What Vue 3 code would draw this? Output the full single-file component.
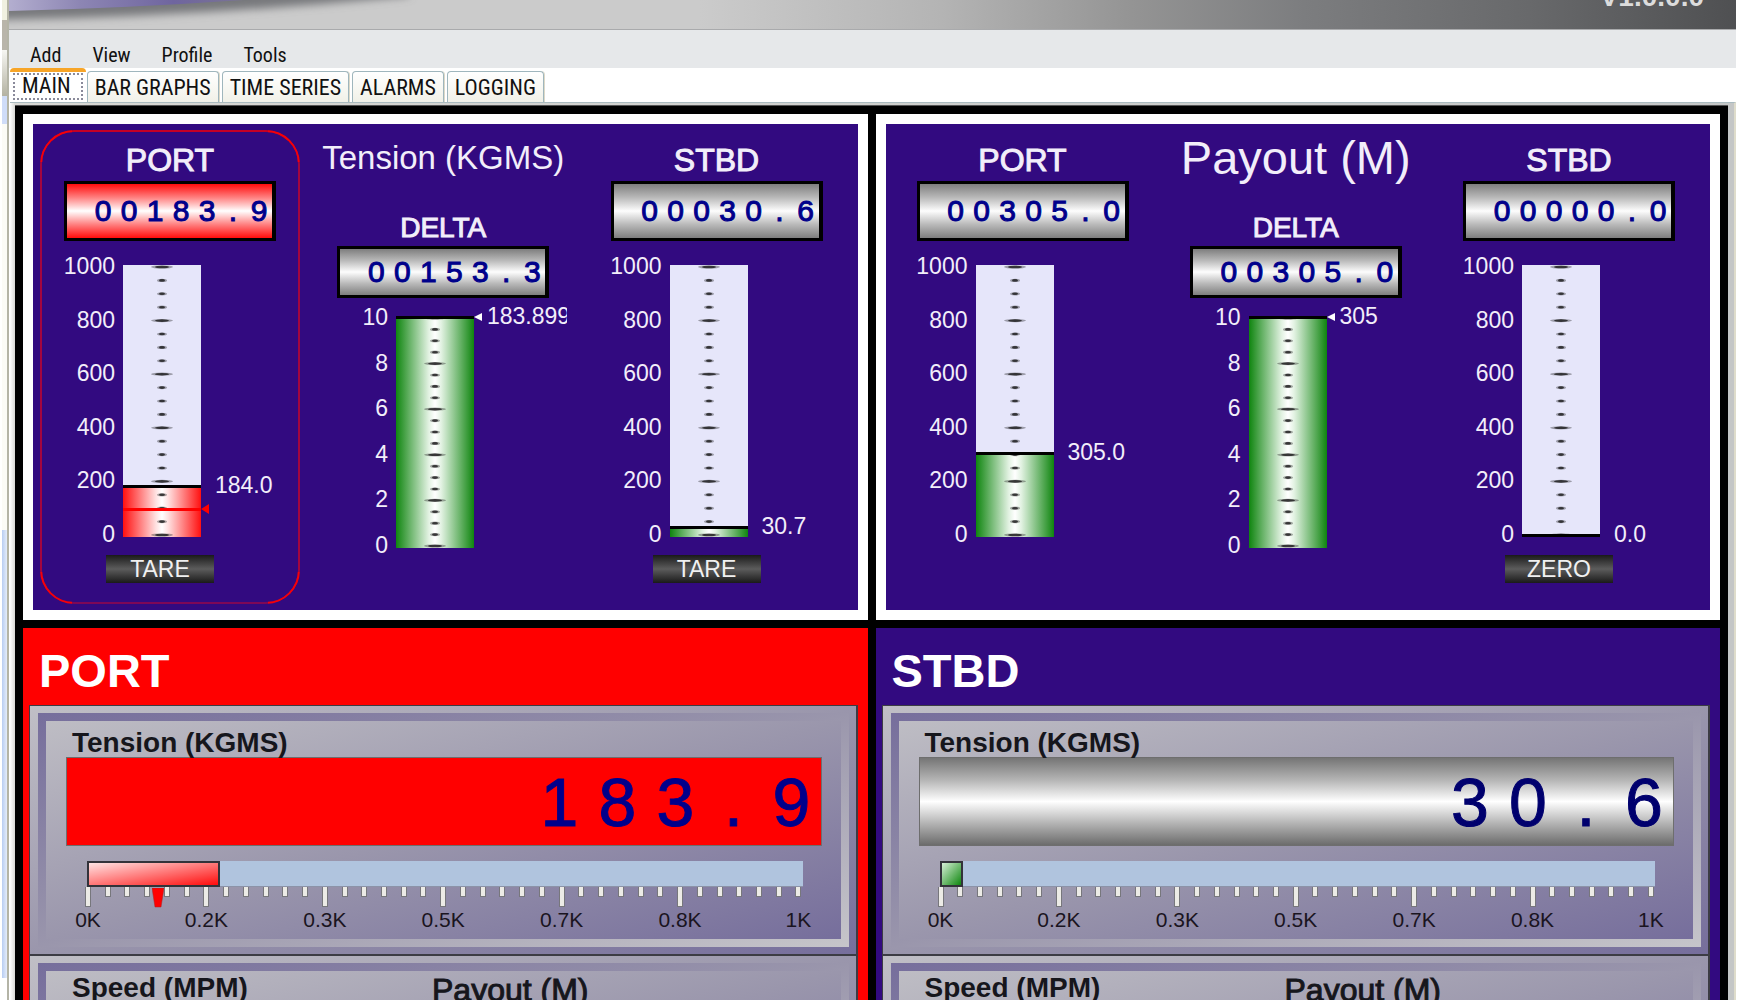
<script setup>
const menus = ['Add', 'View', 'Profile', 'Tools']
const tabs = ['MAIN', 'BAR GRAPHS', 'TIME SERIES', 'ALARMS', 'LOGGING']

const thousand = [1000, 800, 600, 400, 200, 0]
const ten = [10, 8, 6, 4, 2, 0]

const overview = [
  {
    title: 'Tension (KGMS)',
    size: 'normal',
    gauges: [
      { kind: 'side', title: 'PORT', digits: '00183.9', alarm: true, scale: thousand, height: 272, ratio: 0.184, limit: 0.096, readout: '184.0', action: 'TARE' },
      { kind: 'delta', title: 'DELTA', digits: '00153.3', scale: ten, height: 232, ratio: 1, marker: true, readout: '183.899' },
      { kind: 'side', title: 'STBD', digits: '00030.6', scale: thousand, height: 272, ratio: 0.031, readout: '30.7', action: 'TARE' },
    ],
  },
  {
    title: 'Payout (M)',
    size: 'large',
    gauges: [
      { kind: 'side', title: 'PORT', digits: '00305.0', scale: thousand, height: 272, ratio: 0.305, readout: '305.0' },
      { kind: 'delta', title: 'DELTA', digits: '00305.0', scale: ten, height: 232, ratio: 1, marker: true, readout: '305' },
      { kind: 'side', title: 'STBD', digits: '00000.0', scale: thousand, height: 272, ratio: 0, readout: '0.0', action: 'ZERO' },
    ],
  },
]

const sides = [
  { name: 'PORT', alarm: true, digits: '183.9', fill: 18.6, pointer: 9.9 },
  { name: 'STBD', alarm: false, digits: '30.6', fill: 3.3, pointer: null },
]

const axis = ['0K', '0.2K', '0.3K', '0.5K', '0.7K', '0.8K', '1K']
const ticks = Array.from({ length: 37 }, (_, i) => i % 6 === 0 && i < 36)

const levelY = (g, ratio) => (ratio >= 1 ? 1 : Math.round(2 + (g.height - 4) * (1 - ratio)))
const tickMarks = (g) =>
  Array.from({ length: 21 }, (_, i) => ({ y: 2 + ((g.height - 4) * i) / 20, major: i % 4 === 0 }))
</script>

<template>
  <div class="screen">
    <div class="backdrop">
      <i class="b1"></i><i class="b2"></i><i class="b3"></i><i class="b4"></i><i class="b5"></i><i class="b6"></i>
    </div>

    <div class="window">
      <header class="banner">
        <svg class="swoosh" viewBox="0 0 480 30" aria-hidden="true">
          <defs>
            <linearGradient id="swooshFill" x1="0" x2="1" y1="0" y2="0">
              <stop offset="0" stop-color="#b3aecf" />
              <stop offset=".3" stop-color="#8d86b4" />
              <stop offset=".7" stop-color="#6f659f" />
              <stop offset="1" stop-color="#7a7494" />
            </linearGradient>
            <filter id="swooshBlur" filterUnits="userSpaceOnUse" x="-40" y="-60" width="560" height="120">
              <feGaussianBlur stdDeviation="4" />
            </filter>
          </defs>
          <path d="M-30 -40V20Q180 18 400 -4V-40Z" fill="#77787c" filter="url(#swooshBlur)" />
          <path d="M0 0V11Q120 8 235 0Z" fill="url(#swooshFill)" />
        </svg>
        <span class="version">V1.0.0.0</span>
      </header>

      <nav class="menu">
        <button v-for="m in menus" :key="m" type="button">{{ m }}</button>
      </nav>

      <div class="tabs" role="tablist">
        <button v-for="(t, i) in tabs" :key="t" type="button" role="tab" :aria-selected="i === 0" :class="['tab', { active: i === 0 }]">
          <span>{{ t }}</span>
        </button>
      </div>

      <div class="page">
        <main class="board">
          <section v-for="p in overview" :key="p.title" class="overview">
            <div v-for="(g, gi) in p.gauges" :key="gi" :class="['group', g.kind, { alarm: g.alarm }]">
              <h2 v-if="g.kind === 'delta'" :class="p.size">{{ p.title }}</h2>
              <h3>{{ g.title }}</h3>
              <div class="lcd"><span v-for="(d, i) in g.digits" :key="i">{{ d }}</span></div>
              <div class="gauge">
                <div class="scale"><span v-for="n in g.scale" :key="n">{{ n }}</span></div>
                <svg class="bar" width="78" :height="g.height" :viewBox="`0 0 78 ${g.height}`">
                  <defs>
                    <linearGradient :id="`fill-${p.size}-${gi}`">
                      <stop offset="0" :stop-color="g.alarm ? '#ff1010' : '#0f850f'" />
                      <stop offset=".42" :stop-color="g.alarm ? '#ffe0e0' : '#e2f2e2'" />
                      <stop offset=".5" stop-color="#fff" />
                      <stop offset=".58" :stop-color="g.alarm ? '#ffe0e0' : '#e2f2e2'" />
                      <stop offset="1" :stop-color="g.alarm ? '#ff1010' : '#0f850f'" />
                    </linearGradient>
                  </defs>
                  <rect width="78" :height="g.height" fill="#e6e6fa" />
                  <rect :y="levelY(g, g.ratio)" width="78" :height="g.height - levelY(g, g.ratio)" :fill="`url(#fill-${p.size}-${gi})`" />
                  <g v-for="(t, i) in tickMarks(g)" :key="i" fill="#111">
                    <ellipse cx="39" :cy="t.y" :rx="t.major ? 11 : 5" ry="1.6" opacity=".35" />
                    <ellipse cx="39" :cy="t.y" :rx="t.major ? 7 : 3" ry="1.3" opacity=".75" />
                  </g>
                  <rect v-if="g.limit" :y="levelY(g, g.limit) - 1" width="78" height="3" fill="#f00" />
                  <rect :y="levelY(g, g.ratio) - 1" width="78" height="3" fill="#000" />
                </svg>
                <div class="readout">
                  <svg v-if="g.limit" class="limit" :style="{ top: levelY(g, g.limit) - 6 + 'px' }" width="9" height="12" viewBox="0 0 9 12">
                    <path d="M0 6L8 1V11Z" fill="#f00" />
                  </svg>
                  <div class="value" :style="{ marginTop: levelY(g, g.ratio) - 13 + 'px' }">
                    <svg v-if="g.marker" width="8" height="12" viewBox="0 0 8 12"><path d="M0 7L8 3V11Z" fill="#fff" /></svg>
                    <span>{{ g.readout }}</span>
                  </div>
                </div>
              </div>
              <button v-if="g.action" type="button" class="action">{{ g.action }}</button>
            </div>
          </section>

          <section v-for="s in sides" :key="s.name" :class="['side-panel', { alarm: s.alarm }]">
            <h1>{{ s.name }}</h1>
            <div class="card first">
              <div class="bevel">
                <div class="face">
                  <h4>Tension (KGMS)</h4>
                  <div class="big-lcd"><span v-for="(d, i) in s.digits" :key="i">{{ d }}</span></div>
                  <div class="linear">
                    <div class="track"><div class="fill" :style="{ width: s.fill + '%' }"></div></div>
                    <div class="ticks"><i v-for="(major, i) in ticks" :key="i" :class="{ major }"></i></div>
                    <svg v-if="s.pointer" class="pointer" :style="{ left: s.pointer + '%' }" width="12" height="20" viewBox="0 0 12 20">
                      <path d="M0 0H12L9 19H3Z" fill="#f00" stroke="#a22" stroke-width=".5" />
                    </svg>
                    <div class="axis"><span v-for="a in axis" :key="a">{{ a }}</span></div>
                  </div>
                </div>
              </div>
            </div>
            <div class="card second">
              <div class="bevel">
                <div class="face split">
                  <h4>Speed (MPM)</h4>
                  <h4 class="wide">Payout (M)</h4>
                </div>
              </div>
            </div>
          </section>
        </main>
      </div>
    </div>
    <div class="edge"></div>
  </div>
</template>

<style>
body {
  margin: 0;
  background: #fff;
}
</style>

<style scoped>
.screen {
  display: flex;
  height: 100vh;
  overflow: hidden;
  font-family: "Liberation Sans", Arial, sans-serif;
  background: #fff;
}
.screen * {
  box-sizing: border-box;
}
h1, h2, h3, h4 {
  margin: 0;
  font-weight: 400;
  white-space: nowrap;
}
button {
  font-family: inherit;
  border: 0;
  padding: 0;
  margin: 0;
  background: none;
}

/* slice of the window behind, left of the application */
.backdrop {
  width: 9px;
  flex: none;
  display: flex;
  flex-direction: column;
  padding-left: 2px;
  border-right: 2px solid #b4b4a6;
}
.b1 { height: 20px; background: #f0f0e0; }
.b2 { height: 30px; background: #b9b5aa; }
.b3 { height: 46px; background: linear-gradient(#f6f6f2, #b4b2a2); }
.b4 { height: 28px; background: #cfdcf8; }
.b5 { height: 406px; background: #fbfbf6; }
.b6 { height: 448px; background: linear-gradient(90deg, #b8cdf2, #e4ecfa); }
.edge {
  width: 2px;
  flex: none;
  background: #fff;
}

.window {
  flex: 1;
  min-width: 0;
  display: flex;
  flex-direction: column;
}
.banner {
  position: relative;
  height: 30px;
  flex: none;
  overflow: hidden;
  display: flex;
  justify-content: flex-end;
  padding-right: 32px;
  background: linear-gradient(90deg, #cbcbcb 0, #cbcbcb 40%, #b4b4b4 54%, #949494 65%, #7c7d7f 75%, #68696b 88%, #4f5052 100%);
  border-bottom: 1px solid #a9aaac;
}
.swoosh {
  position: absolute;
  left: 0;
  top: 0;
  width: 480px;
  height: 30px;
}
.version {
  position: relative;
  margin-top: -18px;
  font-size: 28px;
  line-height: 30px;
  font-weight: 700;
  color: #dcdcdc;
}

.menu {
  height: 38px;
  flex: none;
  display: flex;
  align-items: center;
  gap: 31px;
  padding: 11px 0 0 21px;
  background: #e6e8ea;
}
.menu button,
.tab {
  font-family: "Liberation Sans Narrow", "Roboto Condensed", "DejaVu Sans Condensed", sans-serif;
  font-size: 20px;
  line-height: 24px;
  color: #111;
}

.tabs {
  height: 34px;
  flex: none;
  display: flex;
  align-items: flex-end;
  gap: 3px;
  padding-left: 1px;
}
.tab {
  height: 31px;
  padding: 2px 7px 0;
  border: 1px solid #9fb6bd;
  border-bottom: 0;
  border-radius: 4px 4px 0 0;
  font-size: 22px;
  background: linear-gradient(#fff, #f1f1e8);
  box-shadow: 1px 0 0 #ddd9c8;
}
.tab.active {
  height: 34px;
  border: 0;
  border-top: 4px solid #f7a528;
  padding: 1px 3px 2px;
  background: #fff;
  box-shadow: none;
  margin-right: -2px;
}
.tab.active span {
  display: block;
  height: 27px;
  padding: 0 10px 0 7px;
  line-height: 21px;
  border: 2px dotted #8a8a9a;
}

.page {
  flex: 1;
  min-height: 0;
  margin-left: 1px;
  border-top: 1px solid #a9babf;
  border-right: 2px solid #dedccb;
  padding: 2px 6px 0 5px;
  background: linear-gradient(90deg, #fff 0, #d8d8d4 5px, #c4c6c6 100%);
}
.board {
  display: grid;
  grid-template-columns: 1fr 1fr;
  gap: 8px;
  padding: 8px;
  background: #000;
  border-top: 1px solid #555;
}

.overview {
  min-width: 0;
  display: grid;
  grid-template-columns: 260px 1fr 260px;
  border: 10px solid #fff;
  padding: 0 11px 0 7px;
  background: #320a80;
  color: #f2eefa;
}
.group {
  position: relative;
  display: flex;
  flex-direction: column;
  min-width: 0;
}
.group.side {
  margin: 6px 0;
  padding: 10px 0 21px;
}
.group.alarm::before,
.group.alarm::after {
  content: "";
  position: absolute;
  inset: 0;
  border: 2px solid #a3063f;
  border-radius: 34px;
  pointer-events: none;
}
.group.alarm::before {
  border-top-color: #c50024;
  border-bottom-color: #7d0857;
}
.group.alarm::after {
  border-color: #f60008;
  mask:
    linear-gradient(#000 0 0) 0 0 / 32px 32px no-repeat,
    linear-gradient(#000 0 0) 100% 0 / 32px 32px no-repeat,
    linear-gradient(#000 0 0) 0 100% / 32px 32px no-repeat,
    linear-gradient(#000 0 0) 100% 100% / 32px 32px no-repeat;
}
h2 {
  text-align: center;
  line-height: 68px;
  margin-bottom: 18px;
}
h2.normal { font-size: 33px; }
h2.large { font-size: 47px; }
h3 {
  text-align: center;
  font-size: 32px;
  line-height: 41px;
  -webkit-text-stroke: 1px currentColor;
}
.delta h3 {
  font-size: 28px;
  line-height: 36px;
}

.lcd {
  width: 212px;
  height: 60px;
  align-self: center;
  display: flex;
  justify-content: flex-end;
  align-items: center;
  border: 3px solid #000;
  border-right-width: 4px;
  font-size: 30px;
  line-height: 36px;
  color: #00008b;
  -webkit-text-stroke: 1px #00008b;
  background: linear-gradient(#7e7e7e, #b9b9b9 25%, #fdfdfd 50%, #b9b9b9 75%, #7e7e7e);
}
.delta .lcd {
  height: 52px;
}
.alarm .lcd {
  background: linear-gradient(#ff0c0c, #ff8080 25%, #fff 50%, #ff8080 75%, #ff0c0c);
}
.lcd span {
  width: 26px;
  text-align: center;
}

.gauge {
  display: flex;
  gap: 8px;
  margin-top: 24px;
  font-size: 23px;
  line-height: 20px;
}
.delta .gauge {
  margin-top: 18px;
}
.scale {
  width: 75px;
  flex: none;
  margin: -9px 0 -7px;
  display: flex;
  flex-direction: column;
  justify-content: space-between;
  text-align: right;
}
.delta .scale {
  width: 88px;
}
.bar {
  display: block;
  flex: none;
}
.readout {
  position: relative;
  width: 93px;
  margin-left: -8px;
}
.side .readout {
  width: 99px;
}
.limit {
  position: absolute;
  left: 0;
}
.value {
  display: flex;
  align-items: center;
  gap: 5px;
  padding-left: 14px;
  height: 24px;
  margin-bottom: -24px;
  overflow: hidden;
}
.value svg {
  flex: none;
}
.delta .value {
  padding-left: 0;
}
.action {
  width: 108px;
  height: 28px;
  margin: 18px 0 0 66px;
  font-size: 23px;
  line-height: 26px;
  color: #f0f0f0;
  background: linear-gradient(#1a1a1a, #5c5c5c 50%, #1a1a1a);
}

.side-panel {
  min-width: 0;
  padding: 0 10px 0 6px;
  background: #320a80;
}
.side-panel.alarm {
  background: #f00;
}
h1 {
  padding-left: 10px;
  font-size: 47px;
  line-height: 52px;
  font-weight: 700;
  color: #fff;
  padding-top: 17px;
  height: 77px;
}
.card {
  padding: 7px 7px 7px 8px;
  border: solid #3c3c44;
  border-width: 1px 2px 2px 1px;
  background: linear-gradient(to bottom right, #c0bfc6, #9a96ac 50%, #766e9c);
}
.card.first {
  height: 251px;
}
.card.second {
  height: 250px;
  border-top: 0;
}
.bevel {
  height: 100%;
  padding: 8px;
  background: linear-gradient(to bottom right, #766e9c, #9a96ac 50%, #c6c5ca);
}
.face {
  height: 100%;
  padding: 8px 19px 0 20px;
  background: linear-gradient(to bottom right, #bebdc4, #9a96ac 50%, #766e9c);
}
h4 {
  padding-left: 6px;
  font-size: 28px;
  line-height: 28px;
  font-weight: 700;
  color: #16161c;
}
.big-lcd {
  height: 89px;
  display: flex;
  justify-content: flex-end;
  align-items: center;
  border: 1px solid #6e6e6e;
  font-size: 68px;
  line-height: 80px;
  color: #00006e;
  -webkit-text-stroke: 1px #00006e;
  background: linear-gradient(#757575, #b4b4b4 25%, #fff 50%, #b4b4b4 75%, #6c6c6c);
}
.alarm .big-lcd {
  color: #00008b;
  -webkit-text-stroke-color: #00008b;
  background: #f00;
}
.big-lcd span {
  width: 58px;
  text-align: center;
}

.linear {
  position: relative;
  margin: 15px 20px 0 19px;
}
.track {
  height: 26px;
  margin: 0 -1px 0 2px;
  background: #b0c4de;
  border-bottom: 1px solid #8c93a8;
}
.fill {
  height: 26px;
  border: 2px solid #33333a;
  background: linear-gradient(to bottom right, #d6f0d6, #0f870f);
}
.alarm .fill {
  background: linear-gradient(to bottom right, #ffe4e4, #ff0c0c);
}
.ticks {
  height: 20px;
  display: flex;
  justify-content: space-between;
}
.ticks i {
  width: 6px;
  height: 10px;
  border: 1px solid #77777c;
  border-top: 0;
  background: #ecebe6;
}
.ticks i.major {
  height: 20px;
}
.pointer {
  position: absolute;
  top: 27px;
  margin-left: -4px;
}
.axis {
  display: flex;
  justify-content: space-between;
  margin: 1px -27px 0;
  font-size: 21px;
  line-height: 24px;
  color: #1a1420;
}
.axis span {
  width: 60px;
  text-align: center;
}
.split {
  display: flex;
  align-items: flex-start;
  padding-top: 0;
}
.split h4 {
  width: 360px;
  line-height: 34px;
}
.split h4.wide {
  font-size: 32px;
  line-height: 38px;
  font-weight: 400;
  -webkit-text-stroke: 1px #16161c;
}
</style>
